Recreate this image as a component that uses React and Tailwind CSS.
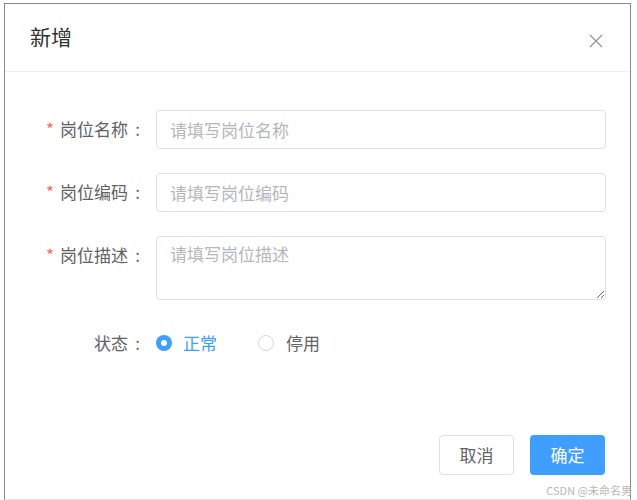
const fields = [
  { label: "岗位名称", placeholder: "请填写岗位名称" },
  { label: "岗位编码", placeholder: "请填写岗位编码" },
];

function Label({ required, children }) {
  return (
    <label className="flex h-[38px] w-[151px] shrink-0 items-center justify-end pr-[9px] text-[17px] text-[#606266]">
      {required && <span className="mr-[6px] text-[17px] text-[#f56c6c]">*</span>}
      {children}
      <span className="w-[19px] text-center">:</span>
    </label>
  );
}

export default function App() {
  return (
    <div
      className="relative h-[500px] w-[637px] bg-white pl-[4px] pt-[3px]"
      style={{ fontFamily: '"Noto Sans CJK SC", "Noto Sans", sans-serif' }}
    >
      <div className="flex h-[497px] w-[627px] flex-col border border-[#8a8a8a] border-b-[#e4e4e4] bg-white">
        {/* header */}
        <div className="flex h-[68px] shrink-0 items-center justify-between border-b border-[#ebeef5] pl-[25px] pr-[27px]">
          <span className="mb-[4px] text-[21px] leading-[28px] text-[#303133]">新增</span>
          <svg width="14" height="14" viewBox="0 0 14 14" className="mt-[7px] text-[#909399]">
            <path d="M1 1 L13 13 M13 1 L1 13" stroke="currentColor" strokeWidth="1.2" fill="none" />
          </svg>
        </div>

        {/* form */}
        <div className="flex flex-col gap-[24px] pr-[24px] pt-[38px]">
          {fields.map((f) => (
            <div key={f.label} className="flex items-start">
              <Label required>{f.label}</Label>
              <input
                placeholder={f.placeholder}
                className="h-[39px] flex-1 rounded-[4px] border border-[#dcdfe6] px-[13px] text-[17px] text-[#606266] outline-none placeholder:text-[#b4b7bd]"
              />
            </div>
          ))}
          <div className="flex items-start">
            <Label required>岗位描述</Label>
            <textarea
              placeholder="请填写岗位描述"
              className="h-[64px] flex-1 resize-y rounded-[4px] border border-[#dcdfe6] px-[13px] py-[3px] text-[17px] leading-[27px] text-[#606266] outline-none placeholder:text-[#b4b7bd]"
            />
          </div>
          <div className="flex items-center">
            <Label>状态</Label>
            <div className="flex items-center text-[17px]">
              <span className="flex h-[16px] w-[16px] items-center justify-center rounded-full bg-[#409eff]">
                <span className="h-[6px] w-[6px] rounded-full bg-white" />
              </span>
              <span className="ml-[11px] mr-[41px] text-[#409eff]">正常</span>
              <span className="h-[16px] w-[16px] rounded-full border border-[#d4d7de]" />
              <span className="ml-[12px] text-[#606266]">停用</span>
            </div>
          </div>
        </div>

        {/* footer */}
        <div className="mt-auto flex justify-end gap-[16px] pb-[24px] pr-[25px]">
          <button className="h-[40px] w-[75px] rounded-[4px] border border-[#dcdfe6] bg-white text-[17px] text-[#606266]">
            取消
          </button>
          <button className="h-[40px] w-[75px] rounded-[4px] bg-[#409eff] text-[17px] text-white">
            确定
          </button>
        </div>
      </div>

      <span className="absolute bottom-[3px] right-[5px] text-[11px] leading-[14px] text-[#b8b8b8]">
        CSDN @未命名男
      </span>
    </div>
  );
}
